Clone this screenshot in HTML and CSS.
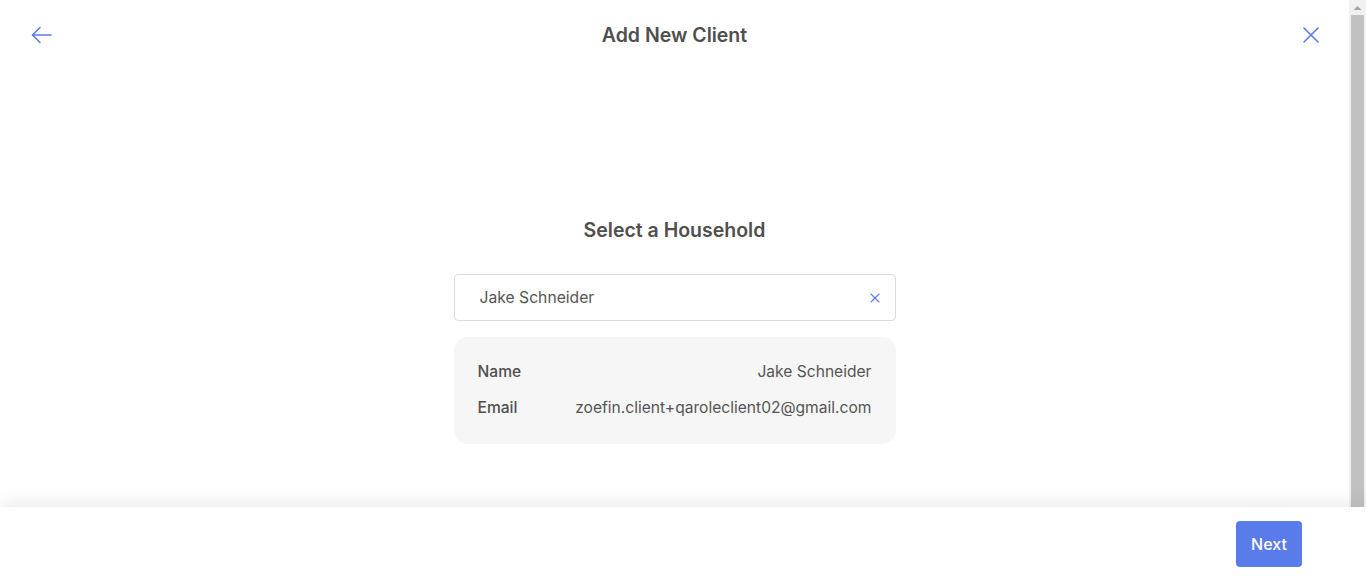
FILE: index.html
```html
<!DOCTYPE html>
<html lang="en">
<head>
<meta charset="utf-8">
<title>Add New Client</title>
<link rel="stylesheet" href="styles.css">
</head>
<body>
<div class="app">
  <div class="page">
    <header class="topbar">
      <button class="icon-btn" aria-label="Back">
        <svg width="24" height="24" viewBox="0 0 24 24" fill="none" stroke="#5a7bea" stroke-width="1.6" stroke-linecap="round" stroke-linejoin="round"><path d="M21 12H3"/><path d="M10 4.5L2.5 12 10 19.5"/></svg>
      </button>
      <h1 class="title">Add New Client</h1>
      <button class="icon-btn" aria-label="Close">
        <svg width="24" height="24" viewBox="0 0 24 24" fill="none" stroke="#5a7bea" stroke-width="1.6" stroke-linecap="round"><path d="M5 5L19 19"/><path d="M19 5L5 19"/></svg>
      </button>
    </header>
    <main class="content">
      <h2 class="subtitle">Select a Household</h2>
      <div class="search">
        <span class="search-text">Jake Schneider</span>
        <svg class="clear" width="10" height="10" viewBox="0 0 10 10" fill="none" stroke="#5a7bea" stroke-width="1.1" stroke-linecap="round"><path d="M1 1L9 9"/><path d="M9 1L1 9"/></svg>
      </div>
      <div class="card">
        <div class="row"><span class="label">Name</span><span class="value">Jake Schneider</span></div>
        <div class="row"><span class="label">Email</span><span class="value">zoefin.client+qaroleclient02@gmail.com</span></div>
      </div>
    </main>
  </div>
  <div class="scrollbar" aria-hidden="true">
    <div class="sb-up">
      <svg width="17" height="15" viewBox="0 0 17 15"><path d="M4.5 10L8.5 6 12.5 10Z" fill="#a3a3a3"/></svg>
    </div>
    <div class="sb-thumb"></div>
  </div>
</div>
<footer class="footer">
  <button class="next">Next</button>
</footer>
</body>
</html>
```
FILE: styles.css
```css
html, body {
  margin: 0;
  padding: 0;
  height: 100%;
  overflow: hidden;
}
body {
  font-family: Inter, "Noto Sans", sans-serif;
  color: #4f4f4f;
  background: #fff;
}
.app {
  display: flex;
  height: 100%;
}
.page {
  flex: 1;
  min-width: 0;
}
.scrollbar {
  width: 17px;
  flex: none;
  background: #f1f1f1;
  display: flex;
  flex-direction: column;
}
.sb-up {
  height: 15px;
  display: flex;
}
.sb-thumb {
  margin: 0 2px;
  height: 510px;
  background: #c1c1c1;
}
.topbar {
  height: 70px;
  display: flex;
  align-items: center;
  justify-content: space-between;
  padding: 0 26px 0 30px;
}
.icon-btn {
  width: 24px;
  height: 24px;
  padding: 0;
  border: 0;
  background: none;
  display: flex;
  align-items: center;
  justify-content: center;
  cursor: pointer;
}
.title {
  margin: 0 4px 0 0;
  font-size: 19.5px;
  font-weight: 600;
  line-height: 24px;
  color: #4f4f4f;
}
.content {
  display: flex;
  flex-direction: column;
  align-items: center;
  padding-top: 148px;
}
.subtitle {
  margin: 0 0 32px;
  font-size: 19.5px;
  font-weight: 600;
  line-height: 24px;
  color: #4f4f4f;
}
.search {
  box-sizing: border-box;
  width: 442px;
  height: 47px;
  border: 1px solid #dcdcdc;
  border-radius: 4px;
  display: flex;
  align-items: center;
  justify-content: space-between;
  padding: 0 15px 0 25px;
}
.search-text {
  font-size: 15.7px;
  color: #555;
}
.card {
  box-sizing: border-box;
  width: 442px;
  margin-top: 16px;
  background: #f6f6f6;
  border-radius: 14px;
  padding: 24px 24px 25px;
  display: flex;
  flex-direction: column;
  gap: 14px;
}
.row {
  display: flex;
  justify-content: space-between;
  line-height: 22px;
  font-size: 15.6px;
}
.label {
  font-weight: 500;
  color: #4f4f4f;
}
.value {
  color: #555;
}
.footer {
  position: fixed;
  left: 0;
  right: 0;
  bottom: 0;
  height: 74px;
  background: #fff;
  box-shadow: 0 -6px 16px rgba(0, 0, 0, 0.07);
  display: flex;
  align-items: center;
  justify-content: flex-end;
  padding-right: 64px;
}
.next {
  width: 66px;
  height: 46px;
  border: 0;
  border-radius: 4px;
  background: #5a7bea;
  color: #fff;
  font-family: Inter, "Noto Sans", sans-serif;
  font-size: 16px;
  font-weight: 500;
  cursor: pointer;
}
```
